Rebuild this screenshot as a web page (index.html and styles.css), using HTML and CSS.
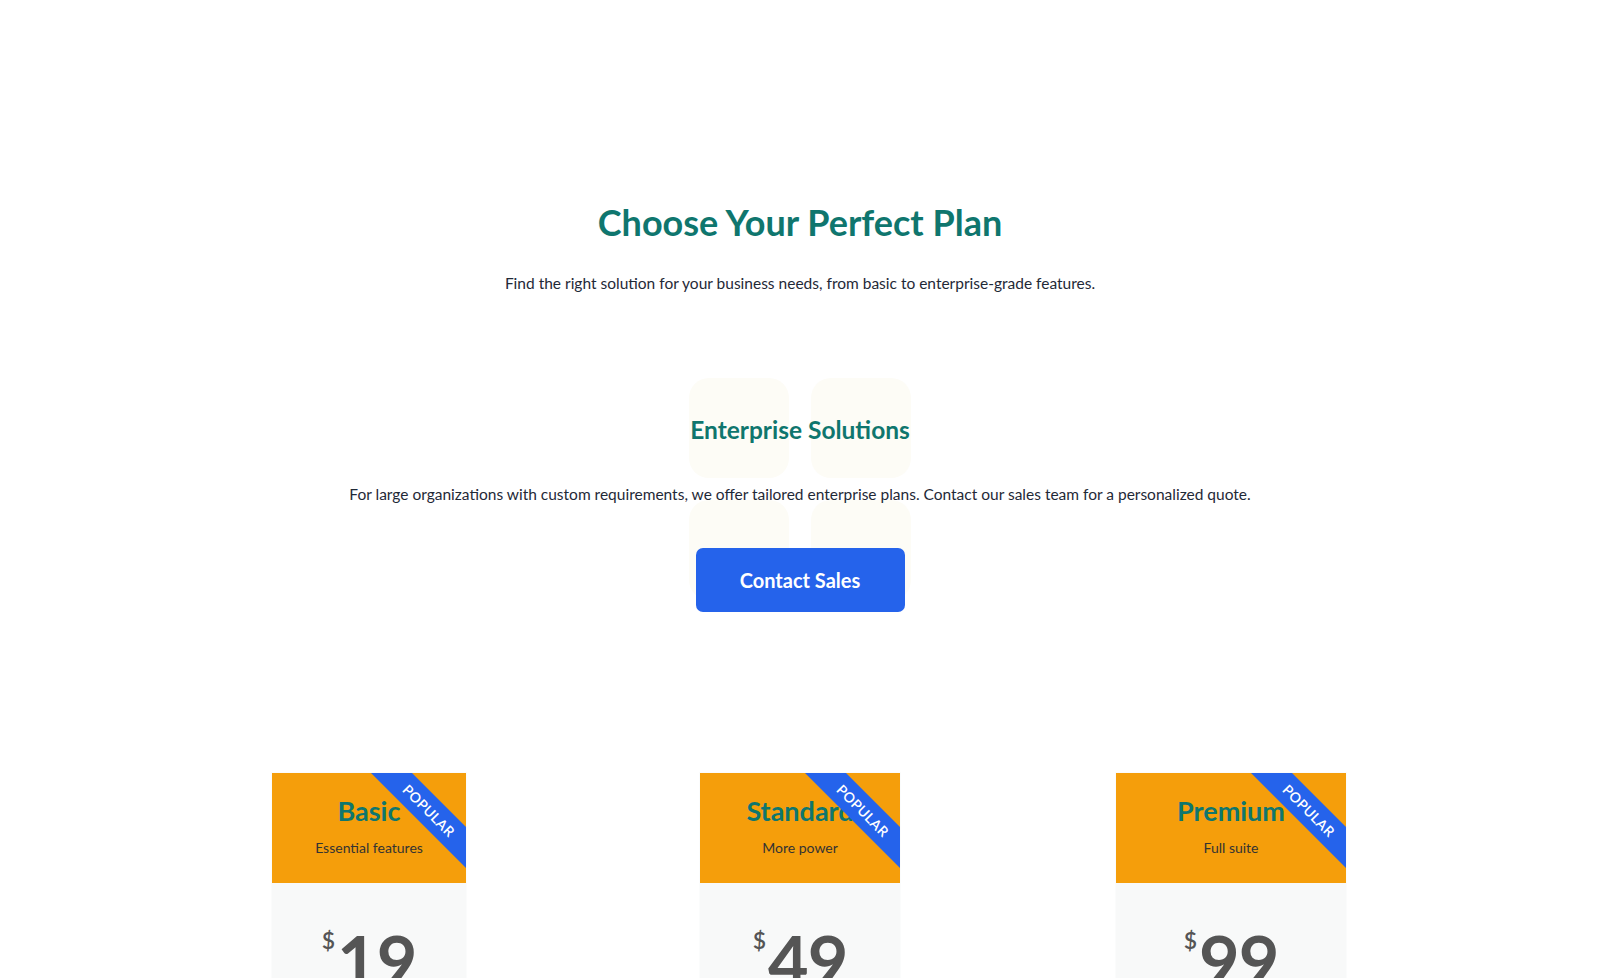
FILE: index.html
```html
<!DOCTYPE html>
<html lang="en">
<head>
<meta charset="utf-8">
<title>Choose Your Perfect Plan</title>
<link rel="stylesheet" href="styles.css">
</head>
<body>
<section class="hero">
  <h1 class="hero-title">Choose Your Perfect Plan</h1>
  <p class="hero-sub">Find the right solution for your business needs, from basic to enterprise-grade features.</p>
</section>

<section class="enterprise">
  <div class="deco" aria-hidden="true">
    <span class="deco-sq"></span><span class="deco-sq"></span><span class="deco-sq"></span><span class="deco-sq"></span>
  </div>
  <h2 class="ent-title">Enterprise Solutions</h2>
  <p class="ent-text">For large organizations with custom requirements, we offer tailored enterprise plans. Contact our sales team for a personalized quote.</p>
  <button class="ent-btn">Contact Sales</button>
</section>

<section class="plans">
  <div class="plan-col">
    <div class="card card-basic">
      <div class="card-head">
        <h3 class="card-title">Basic</h3>
        <p class="card-sub">Essential features</p>
        <div class="ribbon">POPULAR</div>
      </div>
      <div class="card-body">
        <div class="price"><span class="cur">$</span><span class="amt">19</span></div>
      </div>
    </div>
  </div>
  <div class="plan-col">
    <div class="card card-standard">
      <div class="card-head">
        <h3 class="card-title">Standard</h3>
        <p class="card-sub">More power</p>
        <div class="ribbon">POPULAR</div>
      </div>
      <div class="card-body">
        <div class="price"><span class="cur">$</span><span class="amt">49</span></div>
      </div>
    </div>
  </div>
  <div class="plan-col">
    <div class="card card-premium">
      <div class="card-head">
        <h3 class="card-title">Premium</h3>
        <p class="card-sub">Full suite</p>
        <div class="ribbon">POPULAR</div>
      </div>
      <div class="card-body">
        <div class="price"><span class="cur">$</span><span class="amt">99</span></div>
      </div>
    </div>
  </div>
</section>
</body>
</html>
```

FILE: styles.css
```css
* { box-sizing: border-box; }
html, body { margin: 0; padding: 0; background: #ffffff; }
body {
  font-family: "Lato", "Noto Sans", "Liberation Sans", sans-serif;
  color: #1f2937;
  overflow: hidden;
  height: 978px;
}

.hero {
  padding-top: 200px;
  text-align: center;
}
.hero-title {
  margin: 0;
  font-size: 36px;
  line-height: 44px;
  font-weight: 700;
  color: #0f766e;
}
.hero-sub {
  margin: 27px 0 0;
  font-size: 15.5px;
  line-height: 24px;
  color: #1f2937;
}

.enterprise {
  position: relative;
  margin-top: 119px;
  text-align: center;
}
.deco {
  position: absolute;
  top: -36px;
  left: 50%;
  margin-left: -111px;
  display: grid;
  grid-template-columns: 100px 100px;
  grid-auto-rows: 100px;
  gap: 22px;
  z-index: 0;
}
.deco-sq {
  display: block;
  background: #fdfcf6;
  border-radius: 20px;
}
.ent-title, .ent-text, .ent-btn { position: relative; z-index: 1; }
.ent-title {
  margin: 0;
  font-size: 24.5px;
  line-height: 32px;
  font-weight: 700;
  color: #0f766e;
}
.ent-text {
  margin: 36px 0 0;
  font-size: 15.5px;
  line-height: 24px;
  color: #1f2937;
}
.ent-btn {
  display: block;
  margin: 42px auto 0;
  width: 209px;
  height: 64px;
  border: 0;
  border-radius: 7px;
  background: #2563eb;
  color: #ffffff;
  font-family: inherit;
  font-size: 20px;
  font-weight: 700;
}

.plans {
  width: 1293px;
  margin: 160px auto 0;
  display: grid;
  grid-template-columns: repeat(3, 1fr);
}
.plan-col {
  display: flex;
  justify-content: center;
}
.card {
  border: 1px solid rgba(255, 255, 255, 0.45);
  background: #f8f9f9;
  overflow: hidden;
}
.card-basic { width: 196px; }
.card-standard { width: 202px; }
.card-premium { width: 232px; }

.card-head {
  position: relative;
  overflow: hidden;
  height: 111px;
  margin: -1px -1px 0;
  padding-top: 23px;
  background: #f59e0b;
  text-align: center;
}
.card-title {
  margin: 0;
  font-size: 27px;
  line-height: 32px;
  font-weight: 700;
  color: #0f766e;
}
.card-sub {
  margin: 11px 0 0;
  font-size: 14px;
  line-height: 20px;
  color: #333333;
}
.ribbon {
  position: absolute;
  top: 24px;
  right: -37px;
  width: 150px;
  height: 29px;
  line-height: 29px;
  background: #2563eb;
  color: #ffffff;
  font-size: 14px;
  font-weight: 600;
  letter-spacing: 0.3px;
  text-align: center;
  transform: rotate(45deg);
}

.card-body {
  height: 200px;
  padding-top: 42px;
  text-align: center;
}
.price {
  display: inline-flex;
  align-items: flex-start;
  color: #555555;
}
.cur {
  font-size: 23px;
  line-height: 30px;
  font-weight: 600;
  margin-right: 2px;
}
.amt {
  font-size: 70px;
  line-height: 70px;
  font-weight: 700;
  letter-spacing: -1px;
}
```
